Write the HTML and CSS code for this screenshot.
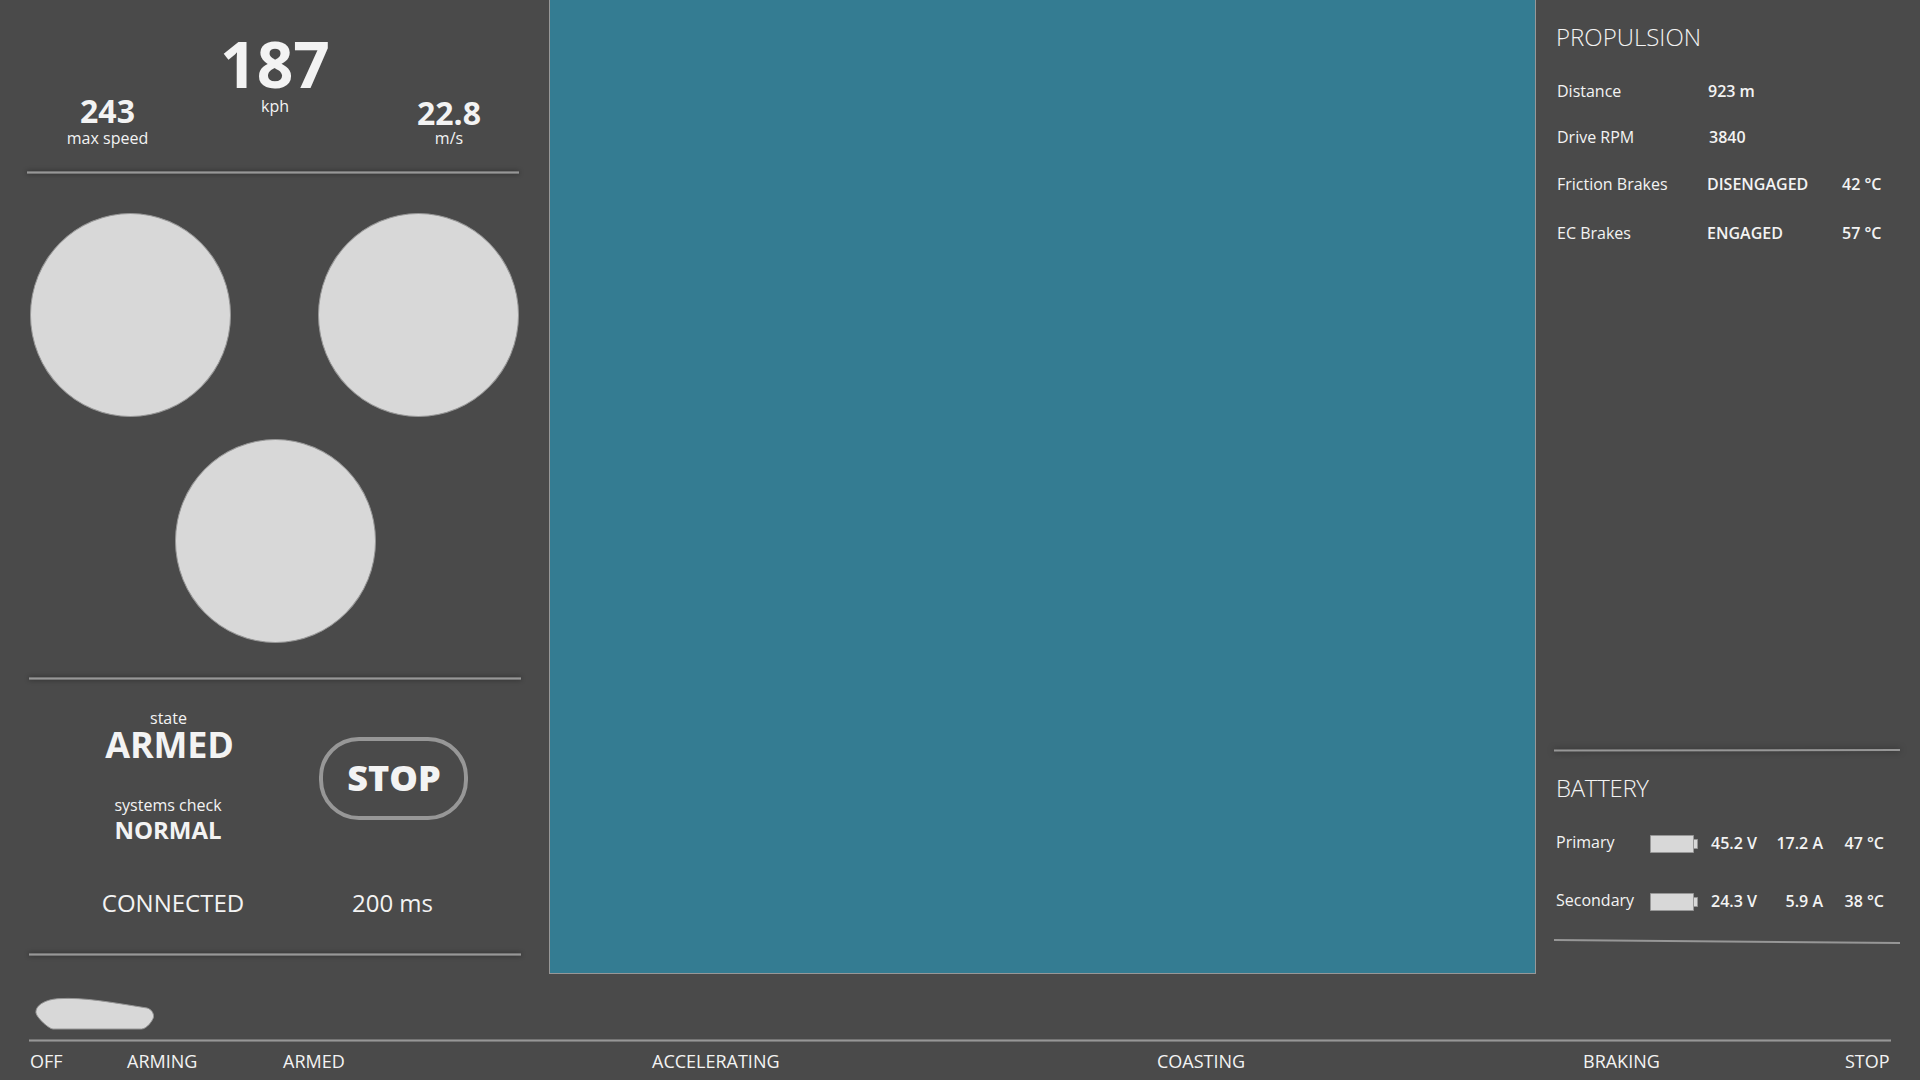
FILE: index.html
```
<!DOCTYPE html>
<html lang="en">
<head>
<meta charset="utf-8">
<title>Pod dashboard</title>
<link rel="stylesheet" href="styles.css">
</head>
<body class="dashboard">
  <aside class="panel-left">
    <section class="speeds">
      <div class="speed speed-max"><strong>243</strong><span>max speed</span></div>
      <div class="speed speed-main"><strong>187</strong><span>kph</span></div>
      <div class="speed speed-metric"><strong>22.8</strong><span>m/s</span></div>
    </section>
    <hr class="rule rule-first">
    <section class="gauges">
      <div class="gauge"></div>
      <div class="gauge"></div>
      <div class="gauge gauge-bottom"></div>
    </section>
    <hr class="rule">
    <section class="control">
      <div class="status">
        <span class="state-label">state</span>
        <strong class="state-value">ARMED</strong>
        <span class="check-label">systems check</span>
        <strong class="check-value">NORMAL</strong>
      </div>
      <button class="stop" type="button">STOP</button>
      <div class="link link-state">CONNECTED</div>
      <div class="link link-latency">200 ms</div>
    </section>
    <hr class="rule">
  </aside>

  <main class="viewport"></main>

  <aside class="panel-right">
    <section class="propulsion">
      <h2>PROPULSION</h2>
      <div class="reading"><span>Distance</span><b class="number">923 m</b></div>
      <div class="reading"><span>Drive RPM</span><b class="number rpm">3840</b></div>
      <div class="reading"><span>Friction Brakes</span><b>DISENGAGED</b><b>42 °C</b></div>
      <div class="reading"><span>EC Brakes</span><b>ENGAGED</b><b>57 °C</b></div>
    </section>
    <svg class="divider divider-shadow" width="346" height="10" viewBox="0 0 346 10"><path d="M0 5.6 346 5" stroke="#979797" stroke-width="2"/></svg>
    <section class="battery">
      <h2>BATTERY</h2>
      <div class="cell">
        <span>Primary</span>
        <svg class="cell-icon" width="48" height="18" viewBox="0 0 48 18"><path d="M.5.5h43v17h-43zM43.5 4.5h4v9h-4z" fill="#d8d8d8" stroke="#979797"/></svg>
        <b>45.2 V</b><b>17.2 A</b><b>47 °C</b>
      </div>
      <div class="cell">
        <span>Secondary</span>
        <svg class="cell-icon" width="48" height="18" viewBox="0 0 48 18"><path d="M.5.5h43v17h-43zM43.5 4.5h4v9h-4z" fill="#d8d8d8" stroke="#979797"/></svg>
        <b>24.3 V</b><b>5.9 A</b><b>38 °C</b>
      </div>
    </section>
    <svg class="divider" width="346" height="10" viewBox="0 0 346 10"><path d="M0 4 346 7" stroke="#979797" stroke-width="2"/></svg>
  </aside>

  <footer class="timeline">
    <svg class="pod" width="120" height="34" viewBox="0 0 120 34"><path d="M18 32C14 32 2 21 1 16C0 8 11 2.5 23 1.7C49 0 77 5.500 112 11C116 12 119 16 118.500 20C118 23 112 32 106.500 32Z" fill="#d8d8d8" stroke="#979797"/></svg>
    <hr class="rule rule-track">
    <div class="phases">
      <span>OFF</span><span>ARMING</span><span>ARMED</span><span>ACCELERATING</span><span>COASTING</span><span>BRAKING</span><span>STOP</span>
    </div>
  </footer>
</body>
</html>
```
FILE: styles.css
```
* { box-sizing: border-box; }

.dashboard {
  margin: 0;
  width: 1920px;
  height: 1080px;
  overflow: hidden;
  display: grid;
  grid-template-columns: 549px 987px 384px;
  grid-template-rows: 974px 106px;
  background: #4a4a4a;
  color: #f3f3f3;
  font: 16px/22px "Open Sans", sans-serif;
}

.rule {
  width: 492px;
  height: 3px;
  margin: 0 0 0 29px;
  border: solid #757575;
  border-width: 1px 0;
  background: #979797;
  box-shadow: 0 0 5px rgba(0, 0, 0, .4);
}
.rule-first { margin-left: 27px; }

/* Left panel */
.panel-left { display: flex; flex-direction: column; }

.speeds {
  height: 171px;
  padding-left: 28px;
  display: grid;
  grid-template-columns: 159px 176px 172px;
  text-align: center;
}
.speed { display: flex; flex-direction: column; }
.speed strong { font-size: 32px; line-height: 32px; }
.speed-max { padding-top: 95px; }
.speed-main { padding-top: 31px; }
.speed-main strong { font-size: 64px; line-height: 66px; }
.speed-main span { line-height: 18px; }
.speed-metric { padding-top: 97px; }
.speed-metric span { line-height: 18px; }

.gauges {
  height: 503px;
  padding: 39px 30px 0 30px;
  display: grid;
  grid-template-columns: 201px 201px;
  grid-template-rows: 204px 204px;
  gap: 22px 87px;
}
.gauge {
  width: 201px;
  height: 204px;
  border: 1px solid #979797;
  border-radius: 50%;
  background: #d8d8d8;
}
.gauge-bottom { grid-column: 1 / 3; margin-left: 145px; }

.control {
  height: 273px;
  padding: 29px 0 0 60px;
  display: grid;
  grid-template-columns: 219px 229px;
  grid-template-rows: 179px 30px;
  justify-items: center;
}
.status { display: flex; flex-direction: column; align-items: center; }
.state-label { line-height: 18px; margin-right: 2px; }
.state-value { font-size: 36px; line-height: 36px; letter-spacing: -.2px; }
.check-label { margin: 32px 3px 0 0; line-height: 20px; }
.check-value { margin-right: 3px; font-size: 24px; line-height: 30px; }
.stop {
  width: 149px;
  height: 83px;
  margin-top: 28px;
  padding: 0 0 2px 1px;
  border: 4px solid #979797;
  border-radius: 40px;
  background: none;
  color: inherit;
  font: 800 36px/50px "Open Sans", sans-serif;
}
.link { font-size: 24px; line-height: 30px; }
.link-state { padding-left: 7px; }
.link-latency { padding-right: 2px; }

.viewport {
  border: solid #979797;
  border-width: 0 1px 1px;
  background: #347c92;
}

/* Right panel */
.panel-right { padding: 22px 0 0 18px; }
.panel-right h2 { margin: 0 0 0 2px; font-size: 24px; font-weight: 300; line-height: 30px; }
.panel-right b { font-weight: 600; }

.propulsion {
  height: 723px;
  display: grid;
  grid-template-rows: 58px 46px 47px 49px 22px;
}
.reading {
  padding-left: 3px;
  display: grid;
  grid-template-columns: 150px 135px 60px;
}
.reading .number { padding-left: 1px; }
.reading .rpm { padding-left: 2px; }

.divider { display: block; overflow: visible; }
.divider-shadow { filter: drop-shadow(0 0 3px rgba(0, 0, 0, .5)); }

.battery { height: 181px; padding-top: 18px; }
.cell {
  height: 58px;
  padding-left: 2px;
  display: grid;
  grid-template-columns: 94px 48px 59px 66px 61px;
  text-align: right;
}
.battery h2 { margin-bottom: 28px; letter-spacing: -.3px; }
.cell span { text-align: left; }
.cell b { padding-top: 1px; }
.cell-icon { margin-top: 4px; }

/* Run timeline */
.timeline { grid-column: 1 / 4; padding: 23px 0 0 29px; }
.pod { display: block; margin: 0 0 8px 5.500px; }
.rule-track { width: 1862px; margin-left: 0; box-shadow: none; }
.phases {
  margin-top: 7px;
  padding-left: 1px;
  display: grid;
  grid-template-columns: 97px 156px 369px 505px 426px 262px 50px;
  font-size: 18px;
  line-height: 24px;
}
```
